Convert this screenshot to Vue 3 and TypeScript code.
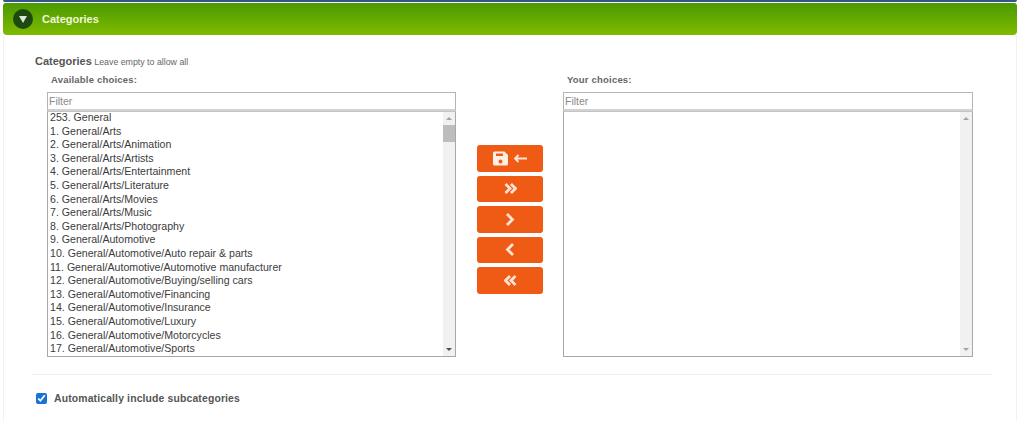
<script setup lang="ts">
const available: string[] = [
  '253. General',
  '1. General/Arts',
  '2. General/Arts/Animation',
  '3. General/Arts/Artists',
  '4. General/Arts/Entertainment',
  '5. General/Arts/Literature',
  '6. General/Arts/Movies',
  '7. General/Arts/Music',
  '8. General/Arts/Photography',
  '9. General/Automotive',
  '10. General/Automotive/Auto repair & parts',
  '11. General/Automotive/Automotive manufacturer',
  '12. General/Automotive/Buying/selling cars',
  '13. General/Automotive/Financing',
  '14. General/Automotive/Insurance',
  '15. General/Automotive/Luxury',
  '16. General/Automotive/Motorcycles',
  '17. General/Automotive/Sports'
]
</script>

<template>
  <div class="page">
    <div class="top-line"></div>
    <div class="panel-head">
      <span class="toggle"><span class="tri"></span></span>
      <span class="head-title">Categories</span>
    </div>
    <div class="panel-body">
      <div class="field-label"><b>Categories</b> <small>Leave empty to allow all</small></div>
      <div class="picker">
        <div class="col left">
          <div class="col-title">Available choices:</div>
          <input class="filter" type="text" placeholder="Filter" />
          <div class="list">
            <div class="options">
              <div v-for="item in available" :key="item" class="option">{{ item }}</div>
            </div>
            <div class="scroll">
              <span class="arrow up"></span>
              <span class="thumb"></span>
              <span class="track"></span>
              <span class="arrow down dark"></span>
            </div>
          </div>
        </div>

        <div class="actions">
          <button class="btn" type="button" aria-label="Save">
            <svg width="15" height="15" viewBox="0 0 15 15">
              <path fill="#fdeee6" fill-rule="evenodd" d="M1.5 0.500h10L15 4v9a1.500 1.500 0 0 1-1.500 1.500h-12A1.500 1.500 0 0 1 0 13V2a1.500 1.500 0 0 1 1.500-1.500zM3 2.500v2.500h7V2.500zm4.500 6a2 2 0 1 0 0 4 2 2 0 0 0 0-4z" />
            </svg>
            <svg width="14" height="9" viewBox="0 0 14 9">
              <path fill="none" stroke="#fde3d6" stroke-width="1.800" d="M14 4.500H2M5.500 1l-3.500 3.500 3.500 3.500" />
            </svg>
          </button>
          <button class="btn" type="button" aria-label="Add all">
            <svg width="13" height="11" viewBox="0 0 13 11">
              <path fill="none" stroke="#fde3d6" stroke-width="2.800" d="M1.500 1l4.500 4.500L1.500 10M7 1l4.500 4.500L7 10" />
            </svg>
          </button>
          <button class="btn" type="button" aria-label="Add">
            <svg width="10" height="13" viewBox="0 0 10 13">
              <path fill="none" stroke="#fde3d6" stroke-width="2.800" d="M2 1l5.500 5.500L2 12" />
            </svg>
          </button>
          <button class="btn" type="button" aria-label="Remove">
            <svg width="10" height="13" viewBox="0 0 10 13">
              <path fill="none" stroke="#fde3d6" stroke-width="2.800" d="M8 1L2.500 6.500 8 12" />
            </svg>
          </button>
          <button class="btn" type="button" aria-label="Remove all">
            <svg width="13" height="11" viewBox="0 0 13 11">
              <path fill="none" stroke="#fde3d6" stroke-width="2.800" d="M6 1L1.500 5.500 6 10M11.500 1L7 5.500l4.500 4.500" />
            </svg>
          </button>
        </div>

        <div class="col">
          <div class="col-title">Your choices:</div>
          <input class="filter" type="text" placeholder="Filter" />
          <div class="list">
            <div class="options"></div>
            <div class="scroll">
              <span class="arrow up"></span>
              <span class="track"></span>
              <span class="arrow down"></span>
            </div>
          </div>
        </div>
      </div>
      <div class="divider"></div>
      <label class="check-row">
        <input type="checkbox" checked />
        <span>Automatically include subcategories</span>
      </label>
    </div>
  </div>
</template>

<style scoped>
.page {
  width: 1024px;
  height: 421px;
  overflow: hidden;
  background: #fff;
  box-sizing: border-box;
  padding: 0 7px 0 3px;
  font-family: "Liberation Sans", Arial, sans-serif;
}

.top-line {
  height: 2px;
  background: #34558b;
  margin-bottom: 1px;
  border-radius: 0 0 2px 2px;
}

.panel-head {
  height: 32px;
  box-sizing: border-box;
  padding-left: 10px;
  display: flex;
  align-items: center;
  gap: 9px;
  border-radius: 3px 3px 4px 4px;
  background: linear-gradient(#4a9a00, #7fba00);
}

.toggle {
  width: 20px;
  height: 20px;
  border-radius: 50%;
  background: #1e4a10;
  display: flex;
  align-items: center;
  justify-content: center;
}

.tri {
  width: 0;
  height: 0;
  border-left: 4px solid transparent;
  border-right: 4px solid transparent;
  border-top: 7px solid #dfe8d8;
}

.head-title {
  font-size: 11px;
  font-weight: 700;
  color: #eef8dc;
}

.panel-body {
  height: 386px;
  box-sizing: border-box;
  padding: 18px 24px 0 31px;
  border-left: 1px solid #f0f0f0;
  border-right: 1px solid #f0f0f0;
}

.field-label {
  height: 13px;
  line-height: 13px;
  color: #555;
}

.field-label b {
  font-size: 11px;
}

.field-label small {
  margin-left: -2px;
  font-size: 8.8px;
  color: #666;
}

.picker {
  display: flex;
  margin-top: 8px;
  padding-left: 12px;
}

.col {
  width: 410px;
}

.col.left {
  width: 409px;
}

.col-title {
  height: 12px;
  line-height: 12px;
  padding-left: 4px;
  margin-bottom: 6px;
  font-size: 9.5px;
  font-weight: 700;
  color: #666;
  letter-spacing: 0.2px;
}

.filter {
  display: block;
  width: 100%;
  height: 19px;
  box-sizing: border-box;
  margin: 0;
  padding: 0 1px;
  border: 1px solid #b4b4b4;
  border-bottom: 2px solid #d2d2d2;
  border-radius: 0;
  outline: none;
  background: #fff;
  font: 10.5px "Liberation Sans", Arial, sans-serif;
}

.filter::placeholder {
  color: #8a8a8a;
  opacity: 1;
}

.list {
  height: 246px;
  box-sizing: border-box;
  display: flex;
  border: 1px solid #a8a8a8;
  border-top-color: #c4c4c4;
}

.options {
  flex: 1;
  margin-top: -1px;
  padding: 0 2px;
  overflow: hidden;
}

.option {
  height: 13.6px;
  line-height: 13.6px;
  font-size: 10.6px;
  color: #3c3c3c;
  white-space: nowrap;
}

.scroll {
  width: 12px;
  display: flex;
  flex-direction: column;
  background: #f1f1f1;
}

.track {
  flex: 1;
}

.thumb {
  height: 17px;
  background: #bdbdbd;
}

.arrow {
  height: 13px;
  display: flex;
  align-items: center;
  justify-content: center;
}

.arrow::before {
  content: "";
  width: 0;
  height: 0;
  border-left: 3px solid transparent;
  border-right: 3px solid transparent;
}

.arrow.up::before {
  border-bottom: 3px solid #a3a3a3;
}

.arrow.down::before {
  border-top: 3px solid #a3a3a3;
}

.arrow.down.dark::before {
  border-top-color: #505050;
}

.actions {
  width: 107px;
  padding: 71px 20px 0 21px;
  box-sizing: border-box;
  display: flex;
  flex-direction: column;
  gap: 4px;
}

.btn {
  height: 26.5px;
  padding: 0;
  border: 0;
  border-radius: 3px;
  background: #ef5a15;
  display: flex;
  align-items: center;
  justify-content: center;
  gap: 5px;
}

.divider {
  height: 1px;
  margin: 17px 0 0 -3px;
  background: #eeeeee;
}

.check-row {
  display: flex;
  align-items: center;
  gap: 7px;
  margin-top: 18px;
  font-size: 10.4px;
  font-weight: 700;
  color: #555;
  letter-spacing: 0.15px;
}

.check-row input {
  width: 11px;
  height: 11px;
  margin: 0 0 0 1px;
  accent-color: #1a73d4;
}
</style>
